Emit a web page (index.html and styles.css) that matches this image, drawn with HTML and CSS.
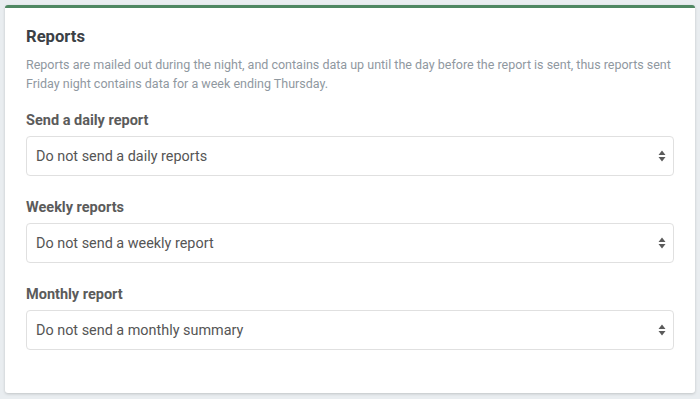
FILE: index.html
```html
<!DOCTYPE html>
<html lang="en">
<head>
  <meta charset="UTF-8">
  <title>Reports</title>
  <link rel="stylesheet" href="styles.css">
</head>
<body>

  <div class="card">
    <h3>Reports</h3>
    <p class="hint">Reports are mailed out during the night, and contains data up until the day before the report is sent, thus reports sent Friday night contains data for a week ending Thursday.</p>

    <div class="group">
      <label for="daily">Send a daily report</label>
      <div class="select-wrap">
        <select id="daily">
          <option>Do not send a daily reports</option>
        </select>
        <svg class="arrows" width="8" height="12" viewBox="0 0 8 12"><path d="M4 0.5L7.5 5H0.5Z M4 11.5L7.5 7H0.5Z" fill="#5b5b5b"/></svg>
      </div>
    </div>

    <div class="group">
      <label for="weekly">Weekly reports</label>
      <div class="select-wrap">
        <select id="weekly">
          <option>Do not send a weekly report</option>
        </select>
        <svg class="arrows" width="8" height="12" viewBox="0 0 8 12"><path d="M4 0.5L7.5 5H0.5Z M4 11.5L7.5 7H0.5Z" fill="#5b5b5b"/></svg>
      </div>
    </div>

    <div class="group">
      <label for="monthly">Monthly report</label>
      <div class="select-wrap">
        <select id="monthly">
          <option>Do not send a monthly summary</option>
        </select>
        <svg class="arrows" width="8" height="12" viewBox="0 0 8 12"><path d="M4 0.5L7.5 5H0.5Z M4 11.5L7.5 7H0.5Z" fill="#5b5b5b"/></svg>
      </div>
    </div>
  </div>

</body>
</html>
```

FILE: styles.css
```css
html, body {
  margin: 0;
  background: #e9edf0;
}
body {
  font-family: Roboto, "Liberation Sans", sans-serif;
  padding: 5px;
}
.card {
  width: 690px;
  box-sizing: border-box;
  background: #fff;
  border-top: 3px solid #4f8762;
  border-radius: 3px;
  box-shadow: 0 1px 3px rgba(0, 0, 0, 0.18);
  padding: 19px 21px 20px;
}
h3 {
  margin: 0;
  font-size: 16.6px;
  line-height: 20px;
  font-weight: 700;
  color: #3b4045;
}
.hint {
  margin: 8px 0 0;
  font-size: 12.5px;
  line-height: 19px;
  color: #8f989f;
}
.group {
  margin-bottom: 23px;
}
.group:first-of-type {
  margin-top: 19px;
}
label {
  display: block;
  font-size: 14.5px;
  line-height: 18px;
  font-weight: 700;
  color: #5b5b5b;
  margin-bottom: 6px;
}
.select-wrap {
  position: relative;
}
select {
  display: block;
  width: 100%;
  height: 40px;
  box-sizing: border-box;
  appearance: none;
  -webkit-appearance: none;
  background: #fff;
  border: 1px solid #e0e0e0;
  border-radius: 4px;
  padding: 0 30px 0 9px;
  font-family: Roboto, "Liberation Sans", sans-serif;
  font-size: 14.4px;
  color: #555;
}
.arrows {
  position: absolute;
  right: 8px;
  top: 14px;
  pointer-events: none;
}
```
